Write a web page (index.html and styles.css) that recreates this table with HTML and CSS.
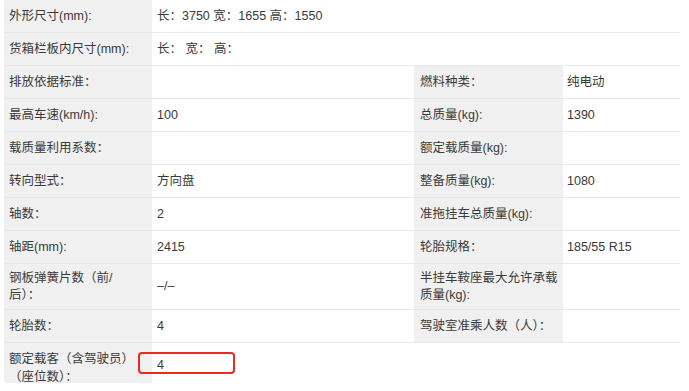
FILE: index.html
```html
<!DOCTYPE html>
<html lang="zh-CN">
<head>
<meta charset="utf-8">
<link rel="stylesheet" href="styles.css">
</head>
<body>
<div class="spec">
  <div class="c lab">外形尺寸(mm):</div>
  <div class="c val span3">长：3750 宽：1655 高：1550</div>

  <div class="c lab">货箱栏板内尺寸(mm):</div>
  <div class="c val span3">长：&nbsp;宽：&nbsp;高：</div>

  <div class="c lab">排放依据标准：</div>
  <div class="c val"></div>
  <div class="c lab lab-r">燃料种类：</div>
  <div class="c val val-r">纯电动</div>

  <div class="c lab">最高车速(km/h):</div>
  <div class="c val">100</div>
  <div class="c lab lab-r">总质量(kg):</div>
  <div class="c val val-r">1390</div>

  <div class="c lab">载质量利用系数：</div>
  <div class="c val"></div>
  <div class="c lab lab-r">额定载质量(kg):</div>
  <div class="c val val-r"></div>

  <div class="c lab">转向型式：</div>
  <div class="c val">方向盘</div>
  <div class="c lab lab-r">整备质量(kg):</div>
  <div class="c val val-r">1080</div>

  <div class="c lab">轴数：</div>
  <div class="c val">2</div>
  <div class="c lab lab-r">准拖挂车总质量(kg):</div>
  <div class="c val val-r"></div>

  <div class="c lab">轴距(mm):</div>
  <div class="c val">2415</div>
  <div class="c lab lab-r">轮胎规格：</div>
  <div class="c val val-r">185/55 R15</div>

  <div class="c lab">钢板弹簧片数（前/后）：</div>
  <div class="c val">–/–</div>
  <div class="c lab lab-r">半挂车鞍座最大允许承载质量(kg):</div>
  <div class="c val val-r"></div>

  <div class="c lab">轮胎数：</div>
  <div class="c val">4</div>
  <div class="c lab lab-r">驾驶室准乘人数（人）：</div>
  <div class="c val val-r"></div>

  <div class="c lab last lab-last">额定载客（含驾驶员）（座位数）：</div>
  <div class="c val last val-last">4<span class="mark"></span></div>
  <div class="c last span2"></div>
</div>
</body>
</html>
```

FILE: styles.css
```css
html, body {
  margin: 0;
  padding: 0;
  background: #ffffff;
}

.spec {
  margin-left: 4px;
  width: 676px;
  display: grid;
  grid-template-columns: 148px 262px 149px 117px;
  grid-template-rows: 33px 33px 33px 33px 33px 33px 33px 33px 46px 33px 40px;
  font-family: "Liberation Sans", "Noto Sans CJK SC", sans-serif;
  font-size: 12.5px;
  line-height: 17px;
  color: #3a3a3a;
}

.c {
  box-sizing: border-box;
  display: flex;
  align-items: center;
  border-bottom: 1px solid #ebebeb;
  padding: 0 5px;
  min-width: 0;
}

.lab {
  background: #f0f0f0;
  border-bottom-color: #e6e6e6;
  padding-right: 14px;
}

.lab-r {
  padding-left: 6px;
  padding-right: 4px;
}

.val-r {
  padding-left: 4px;
}

.span3 {
  grid-column: span 3;
}

.span2 {
  grid-column: span 2;
}

.last {
  border-bottom: none;
}

.lab-last {
  border-bottom-left-radius: 4px;
  align-items: flex-start;
  padding-top: 7px;
  line-height: 18px;
}

.val-last {
  position: relative;
  padding-top: 4px;
}

.mark {
  position: absolute;
  left: -14px;
  top: 9px;
  width: 97px;
  height: 22px;
  box-sizing: border-box;
  border: 2px solid #ec2a1f;
  border-radius: 4px;
}
```
